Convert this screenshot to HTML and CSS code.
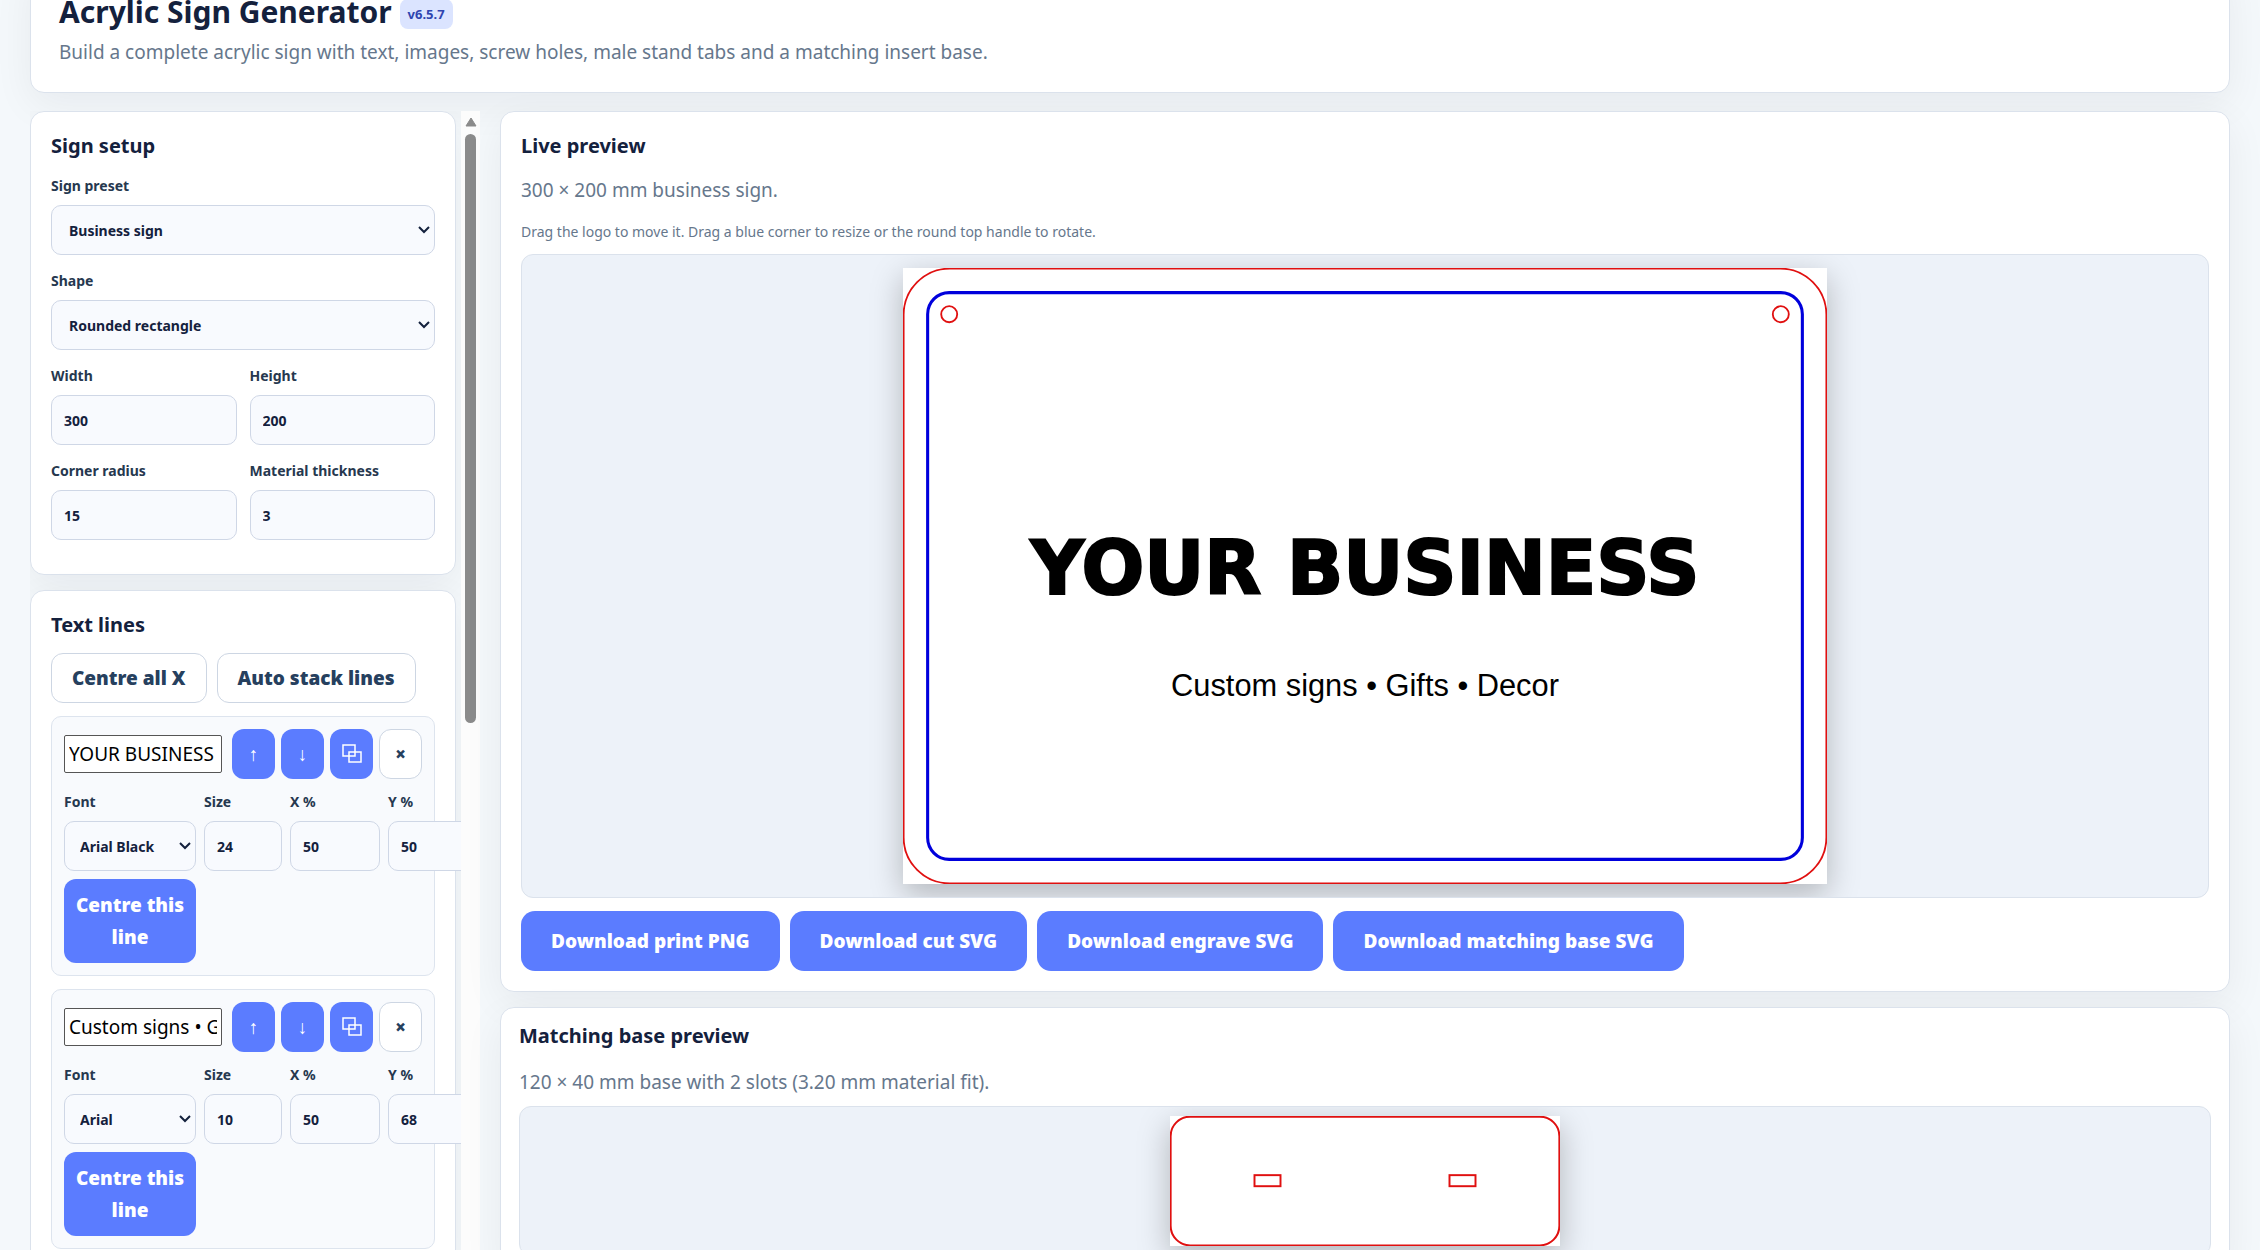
FILE: index.html
```html
<!DOCTYPE html>
<html lang="en">
<head>
    <meta charset="utf-8">
    <title>Acrylic Sign Generator</title>
    <link rel="stylesheet" href="styles.css">
</head>
<body>

<header class="card hero">
    <h1>Acrylic Sign Generator <span class="version">v6.5.7</span></h1>
    <p>Build a complete acrylic sign with text, images, screw holes, male stand tabs and a matching insert base.</p>
</header>

<div class="layout">
    <aside class="sidebar">
        <div class="controls">
            <section class="card">
                <h2>Sign setup</h2>
                <div class="field">
                    <label for="preset">Sign preset</label>
                    <select id="preset">
                        <option>Business sign</option>
                    </select>
                </div>
                <div class="field">
                    <label for="shape">Shape</label>
                    <select id="shape">
                        <option>Rounded rectangle</option>
                    </select>
                </div>
                <div class="two-col">
                    <div class="field">
                        <label for="width">Width</label>
                        <input type="text" id="width" value="300">
                    </div>
                    <div class="field">
                        <label for="height">Height</label>
                        <input type="text" id="height" value="200">
                    </div>
                    <div class="field">
                        <label for="radius">Corner radius</label>
                        <input type="text" id="radius" value="15">
                    </div>
                    <div class="field">
                        <label for="thickness">Material thickness</label>
                        <input type="text" id="thickness" value="3">
                    </div>
                </div>
            </section>

            <section class="card">
                <h2>Text lines</h2>
                <div class="line-tools">
                    <button type="button" class="light">Centre all X</button>
                    <button type="button" class="light">Auto stack lines</button>
                </div>

                <div class="text-line">
                    <div class="line-head">
                        <input type="text" class="line-text" aria-label="Line text" value="YOUR BUSINESS">
                        <button type="button" class="icon-btn">↑</button>
                        <button type="button" class="icon-btn">↓</button>
                        <button type="button" class="icon-btn" aria-label="Duplicate">
                            <svg width="20" height="20" viewBox="0 0 20 20"><path d="M1 1h12v11H1zM7 8h12v10H7z"/></svg>
                        </button>
                        <button type="button" class="icon-btn light">×</button>
                    </div>
                    <div class="line-grid">
                        <div class="field">
                            <label for="font1">Font</label>
                            <select id="font1">
                                <option>Arial Black</option>
                            </select>
                        </div>
                        <div class="field">
                            <label for="size1">Size</label>
                            <input type="text" id="size1" value="24">
                        </div>
                        <div class="field">
                            <label for="x1">X %</label>
                            <input type="text" id="x1" value="50">
                        </div>
                        <div class="field">
                            <label for="y1">Y %</label>
                            <input type="text" id="y1" value="50">
                        </div>
                        <button type="button" class="centre-btn">Centre this line</button>
                    </div>
                </div>

                <div class="text-line">
                    <div class="line-head">
                        <input type="text" class="line-text" aria-label="Line text" value="Custom signs • Gifts • Decor">
                        <button type="button" class="icon-btn">↑</button>
                        <button type="button" class="icon-btn">↓</button>
                        <button type="button" class="icon-btn" aria-label="Duplicate">
                            <svg width="20" height="20" viewBox="0 0 20 20"><path d="M1 1h12v11H1zM7 8h12v10H7z"/></svg>
                        </button>
                        <button type="button" class="icon-btn light">×</button>
                    </div>
                    <div class="line-grid">
                        <div class="field">
                            <label for="font2">Font</label>
                            <select id="font2">
                                <option>Arial</option>
                            </select>
                        </div>
                        <div class="field">
                            <label for="size2">Size</label>
                            <input type="text" id="size2" value="10">
                        </div>
                        <div class="field">
                            <label for="x2">X %</label>
                            <input type="text" id="x2" value="50">
                        </div>
                        <div class="field">
                            <label for="y2">Y %</label>
                            <input type="text" id="y2" value="68">
                        </div>
                        <button type="button" class="centre-btn">Centre this line</button>
                    </div>
                </div>
            </section>
        </div>
        <div class="scrollbar">
            <svg width="12" height="10" viewBox="0 0 12 10"><path d="M6 1L11 9H1z"/></svg>
            <div class="thumb"></div>
        </div>
    </aside>

    <main class="previews">
        <section class="card">
            <h2>Live preview</h2>
            <p class="summary">300 × 200 mm business sign.</p>
            <p class="hint">Drag the logo to move it. Drag a blue corner to resize or the round top handle to rotate.</p>
            <div class="stage">
                <!-- 1 unit = 1 mm -->
                <svg class="sign" viewBox="0 0 300 200">
                    <rect class="cut" x="0.2" y="0.2" width="299.6" height="199.6" rx="15"/>
                    <rect class="engrave" x="8" y="8" width="284" height="184" rx="7"/>
                    <circle class="cut" cx="15" cy="15" r="2.6"/>
                    <circle class="cut" cx="285" cy="15" r="2.6"/>
                    <text class="sign-title" x="150" y="106">YOUR BUSINESS</text>
                    <text class="sign-sub" x="150" y="139">Custom signs • Gifts • Decor</text>
                </svg>
            </div>
            <div class="downloads">
                <button type="button">Download print PNG</button>
                <button type="button">Download cut SVG</button>
                <button type="button">Download engrave SVG</button>
                <button type="button">Download matching base SVG</button>
            </div>
        </section>

        <section class="card base-card">
            <h2>Matching base preview</h2>
            <p class="summary">120 × 40 mm base with 2 slots (3.20 mm material fit).</p>
            <div class="stage">
                <svg class="base" viewBox="0 0 120 40">
                    <rect class="cut" x="0.2" y="0.2" width="119.6" height="39.6" rx="6"/>
                    <rect class="cut" x="26" y="18.2" width="8" height="3.4"/>
                    <rect class="cut" x="86" y="18.2" width="8" height="3.4"/>
                </svg>
            </div>
        </section>
    </main>
</div>

</body>
</html>
```
FILE: styles.css
```css
*{
    box-sizing: border-box;
    padding: 0;
    margin: 0;
}

body{
    display: flex;
    flex-direction: column;
    height: 100vh;
    padding: 0 30px;
    overflow: hidden;
    background-color: #f4f8fb;
    color: #14213d;
    font-family: "Noto Sans", "Open Sans", sans-serif;
    font-size: 19px;
    line-height: 32px;
}

.card{
    padding: 19px 20px 20px;
    border: 1px solid #dbe2ec;
    border-radius: 14px;
    background-color: #fff;
    box-shadow: 0 12px 40px rgba(15,23,42,.06);
}

/*header sits partly above the window, the page is scrolled down a little*/
.hero{
    flex: none;
    margin: -36px 0 18px;
    padding: 27px 28px 24px;
}

h1{
    margin-bottom: 4px;
    font-size: 30px;
    line-height: 40px;
}

.version{
    display: inline-block;
    padding: 0 8px;
    border-radius: 8px;
    background-color: #dbe4ff;
    color: #2f45b0;
    font-size: 13px;
    line-height: 30px;
    vertical-align: 4px;
}

.hero p,
.summary{
    color: #66778c;
}

h2{
    margin-bottom: 13px;
    font-size: 20px;
    line-height: 30px;
}

.layout{
    display: flex;
    flex: 1;
    gap: 20px;
    min-height: 0;
}

.sidebar{
    display: flex;
    flex: none;
    width: 450px;
}

.controls{
    display: flex;
    flex: 1;
    flex-direction: column;
    gap: 15px;
    min-width: 0;
    padding-right: 5px;
    overflow: hidden;
}

.controls .card{
    flex: none;
}

/*fields*/
.field{
    margin-bottom: 14px;
}

label{
    display: block;
    margin-bottom: 7px;
    color: #26384f;
    font-size: 14px;
    font-weight: 700;
    line-height: 24px;
}

.field input,
.field select{
    display: block;
    width: 100%;
    height: 50px;
    padding: 0 12px;
    border: 1px solid #cfd7e6;
    border-radius: 10px;
    background-color: #f8fafe;
    color: #14213d;
    font: 700 14px "Noto Sans", "Open Sans", sans-serif;
}

.field select{
    padding-left: 17px;
    appearance: none;
    background-image: url("data:image/svg+xml,%3Csvg xmlns='http://www.w3.org/2000/svg' width='12' height='8'%3E%3Cpath d='M1 1l5 5 5-5' fill='none' stroke='%2314213d' stroke-width='2'/%3E%3C/svg%3E");
    background-position: right 4px center;
    background-repeat: no-repeat;
}

.two-col{
    display: grid;
    grid-template-columns: 1fr 1fr;
    column-gap: 13px;
}

/*buttons*/
button{
    border: 0;
    border-radius: 12px;
    background-color: #5b7cff;
    color: #fff;
    font: 900 19px/32px "Noto Sans", "Open Sans", sans-serif;
}

button.light{
    border: 1px solid #cdd6e3;
    background-color: #fff;
    color: #26405e;
}

.line-tools{
    display: flex;
    gap: 10px;
}

.line-tools button{
    height: 50px;
    padding: 0 20px;
}

.text-line{
    margin-top: 13px;
    padding: 12px;
    border: 1px solid #dde4ee;
    border-radius: 10px;
    background-color: #f8fafd;
}

.line-head{
    display: grid;
    grid-template-columns: 162px repeat(4, 43px);
    column-gap: 6px;
    align-items: center;
    margin-bottom: 11px;
}

.line-head .line-text{
    height: 38px;
    margin-right: 4px;
    padding: 0 4px;
    border: 1px solid #555;
    border-radius: 2px;
    background-color: #fff;
    color: #000;
    font: 19px "Noto Sans", "Open Sans", sans-serif;
}

.icon-btn{
    height: 50px;
}

.icon-btn svg{
    display: block;
    margin: 0 auto;
    fill: none;
    stroke: #fff;
    stroke-width: 1.5;
}

.line-grid{
    display: grid;
    grid-template-columns: 132px 78px 90px 90px;
    column-gap: 8px;
    row-gap: 8px;
}

.line-grid .field{
    margin: 0;
}

.line-grid select{
    padding-left: 15px;
}

.centre-btn{
    padding: 10px 0;
}

/*scrollbar*/
.scrollbar{
    width: 19px;
    padding-top: 6px;
    background-color: #fcfcfc;
}

.scrollbar svg{
    display: block;
    margin: 0 auto 7px;
    fill: #8b8b8b;
    stroke: #8b8b8b;
    stroke-linejoin: round;
}

.thumb{
    width: 11px;
    height: 52%;
    margin: 0 auto;
    border-radius: 6px;
    background-color: #8b8b8b;
}

/*previews*/
.previews{
    flex: 1;
    min-width: 0;
}

.summary{
    margin-bottom: 14px;
}

.hint{
    margin-bottom: 10px;
    color: #66778c;
    font-size: 14px;
    line-height: 24px;
}

.stage{
    display: flex;
    justify-content: center;
    padding: 13px;
    border: 1px solid #dbe2ec;
    border-radius: 12px;
    background-color: #edf2f9;
    overflow: hidden;
}

.stage svg{
    display: block;
    background-color: #fff;
    box-shadow: 0 10px 30px rgba(0,0,0,.25);
}

.sign{
    width: 100%;
    max-width: 924px;
}

.cut{
    fill: none;
    stroke: #e01010;
    stroke-width: .6;
}

.engrave{
    fill: none;
    stroke: #0000dc;
    stroke-width: 1;
}

.sign-title{
    font: 700 24px "DejaVu Sans", sans-serif;
    stroke: #000;
    stroke-width: .7;
    text-anchor: middle;
}

.sign-sub{
    font: 10px "Liberation Sans", sans-serif;
    text-anchor: middle;
}

.downloads{
    display: flex;
    flex-wrap: wrap;
    gap: 10px;
    margin-top: 13px;
}

.downloads button{
    height: 60px;
    padding: 0 30px;
    border-radius: 14px;
}

.base-card{
    margin-top: 15px;
    padding: 13px 18px;
}

.base-card h2{
    margin-bottom: 15px;
}

.base-card .summary{
    margin-bottom: 8px;
}

.base-card .stage{
    padding: 9px;
}

.base{
    width: 100%;
    max-width: 390px;
}
```
